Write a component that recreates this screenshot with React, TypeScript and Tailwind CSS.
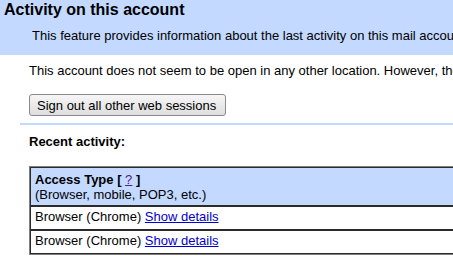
const sessions = ["Chrome", "Chrome"];

export default function App() {
  return (
    <div className="w-[453px] h-[256px] overflow-hidden bg-white font-['Liberation_Sans',Arial,sans-serif] text-[13px] leading-[15px] text-black">
      <div className="h-[55px] bg-[#c3d9ff] pt-[1px]">
        <h1 className="pl-[4px] text-[16px] leading-[18px] font-bold">Activity on this account</h1>
        <p className="mt-[9px] pl-[32px] whitespace-nowrap">
          This feature provides information about the last activity on this mail account and any concurrent activity.
        </p>
      </div>

      <p className="mt-[8px] pl-[29px] whitespace-nowrap">
        This account does not seem to be open in any other location. However, there may be sessions that have not been signed out.
      </p>

      <div className="mt-[16px] pl-[29px]">
        <button
          type="button"
          className="h-[22px] pl-[7px] pr-[9px] border border-[#8a8a8a] rounded-[3px] bg-gradient-to-b from-[#f6f6f6] to-[#dedede] text-[13px] leading-[15px] whitespace-nowrap"
        >
          Sign out all other web sessions
        </button>
      </div>

      <div className="mt-[7px] ml-[20px] h-[2px] bg-[#c3d9ff]" />

      <div className="mt-[9px] pl-[29px]">
        <div className="font-bold">Recent activity:</div>
        <table className="mt-[17px] w-[600px] border border-[#808080] border-separate border-spacing-0">
          <thead>
            <tr>
              <th className="border border-[#2b2b2b] bg-[#c3d9ff] pl-[4px] pt-[4px] pb-[3px] text-left font-normal">
                <div className="font-bold">
                  Access Type [ <a href="#" className="text-[#551a8b] underline font-normal">?</a> ]
                </div>
                <div>(Browser, mobile, POP3, etc.)</div>
              </th>
            </tr>
          </thead>
          <tbody>
            {sessions.map((browser, i) => (
              <tr key={i}>
                <td className="border border-[#2b2b2b] pl-[4px] pt-[2px] pb-[5px] whitespace-nowrap">
                  Browser ({browser}){" "}
                  <a href="#" className="text-[#0000cc] underline">Show details</a>
                </td>
              </tr>
            ))}
          </tbody>
        </table>
      </div>
    </div>
  );
}
